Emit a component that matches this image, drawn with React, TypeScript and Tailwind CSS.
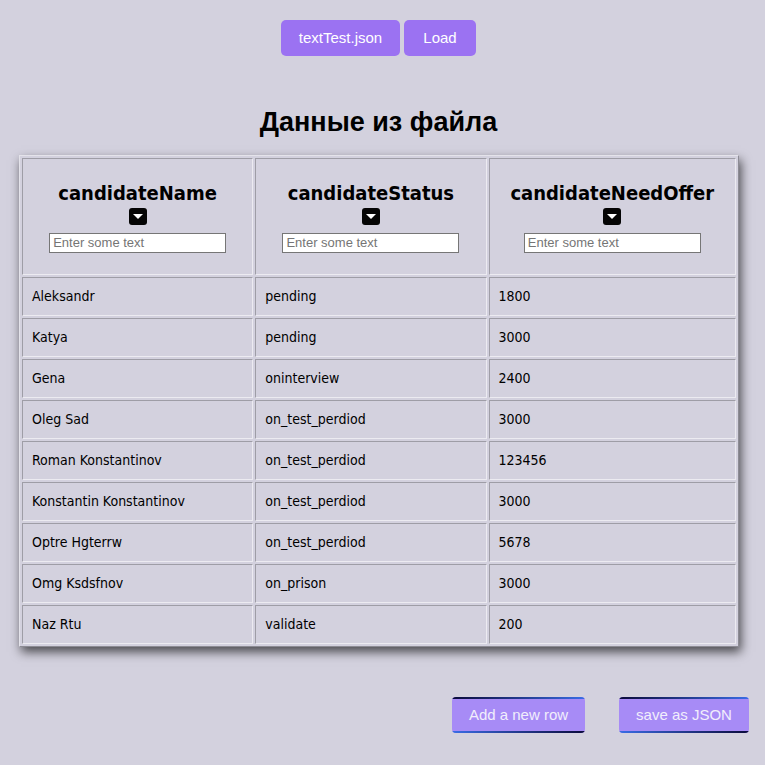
import { useState } from "react";

const rows = [
  { candidateName: "Aleksandr", candidateStatus: "pending", candidateNeedOffer: "1800" },
  { candidateName: "Katya", candidateStatus: "pending", candidateNeedOffer: "3000" },
  { candidateName: "Gena", candidateStatus: "oninterview", candidateNeedOffer: "2400" },
  { candidateName: "Oleg Sad", candidateStatus: "on_test_perdiod", candidateNeedOffer: "3000" },
  { candidateName: "Roman Konstantinov", candidateStatus: "on_test_perdiod", candidateNeedOffer: "123456" },
  { candidateName: "Konstantin Konstantinov", candidateStatus: "on_test_perdiod", candidateNeedOffer: "3000" },
  { candidateName: "Optre Hgterrw", candidateStatus: "on_test_perdiod", candidateNeedOffer: "5678" },
  { candidateName: "Omg Ksdsfnov", candidateStatus: "on_prison", candidateNeedOffer: "3000" },
  { candidateName: "Naz Rtu", candidateStatus: "validate", candidateNeedOffer: "200" },
];

const columns = ["candidateName", "candidateStatus", "candidateNeedOffer"] as const;

function SortIcon() {
  return (
    <svg width="18" height="17" viewBox="0 0 18 17" className="block">
      <rect x="0" y="0" width="18" height="17" rx="3" fill="#050505" />
      <path d="M4 6 L14 6 L9 11 Z" fill="#fff" />
    </svg>
  );
}

function ActionButton({ label, width }: { label: string; width: string }) {
  return (
    <button className={`relative h-[36px] ${width} overflow-hidden rounded-[4px] bg-[#a78bf6] text-[15px] text-[#f1eefc]`}>
      <span className="absolute left-0 right-0 top-0 h-[2px] bg-gradient-to-r from-[#0b0b3c] to-[#3a6de6]" />
      <span className="absolute bottom-0 left-0 right-0 h-[2px] bg-gradient-to-r from-[#3a6de6] to-[#0b0b3c]" />
      {label}
    </button>
  );
}

export default function App() {
  const [filters, setFilters] = useState({ candidateName: "", candidateStatus: "", candidateNeedOffer: "" });

  return (
    <div className="min-h-screen bg-[#d3d1de] pt-5 pb-8 pr-[8px] font-['Liberation_Sans',Arial,sans-serif]">
      {/* File controls */}
      <div className="flex justify-center gap-1">
        <button className="h-[36px] w-[119px] rounded-[5px] bg-[#9b72f2] text-[15px] text-white">
          textTest.json
        </button>
        <button className="h-[36px] w-[72px] rounded-[5px] bg-[#9b72f2] text-[15px] text-white">
          Load
        </button>
      </div>

      <h2 className="mt-[48px] text-center text-[27px] leading-[36px] font-bold text-black">Данные из файла</h2>

      <div className="mt-[15px] pl-[19px]">
        <table className="w-[720px] border-separate border-spacing-[2px] border border-t-[#e4e3ea] border-l-[#e4e3ea] border-r-[#8c8b94] border-b-[#8c8b94] shadow-[2px_5px_10px_rgba(0,0,0,0.65)] font-['DejaVu_Sans_Condensed','DejaVu_Sans',sans-serif]">
          <thead>
            <tr>
              {columns.map((col, i) => (
                <th
                  key={col}
                  className={`h-[117px] border border-t-[#9e9da6] border-l-[#9e9da6] border-r-[#ecebf1] border-b-[#ecebf1] align-middle ${i === 2 ? "w-[248px]" : "w-[232px]"}`}
                >
                  <div className="flex flex-col items-center">
                    <span className="text-[20px] font-bold leading-[24px] text-black">{col}</span>
                    <span className="mt-[3px]">
                      <SortIcon />
                    </span>
                    <input
                      type="text"
                      placeholder="Enter some text"
                      value={filters[col]}
                      onChange={(e) => setFilters({ ...filters, [col]: e.target.value })}
                      className="mt-[8px] h-[20px] w-[177px] border border-[#767676] bg-white px-[3px] font-['Liberation_Sans',Arial,sans-serif] text-[13px] font-normal text-black placeholder:text-[#757575] focus:outline-none"
                    />
                  </div>
                </th>
              ))}
            </tr>
          </thead>
          <tbody>
            {rows.map((row) => (
              <tr key={row.candidateName}>
                {columns.map((col) => (
                  <td
                    key={col}
                    className="h-[39px] border border-t-[#9e9da6] border-l-[#9e9da6] border-r-[#ecebf1] border-b-[#ecebf1] px-[9px] text-[14px] text-black"
                  >
                    {row[col]}
                  </td>
                ))}
              </tr>
            ))}
          </tbody>
        </table>
      </div>

      {/* Actions */}
      <div className="mt-[50px] flex justify-end gap-[34px] pr-[8px]">
        <ActionButton label="Add a new row" width="w-[133px]" />
        <ActionButton label="save as JSON" width="w-[130px]" />
      </div>
    </div>
  );
}
